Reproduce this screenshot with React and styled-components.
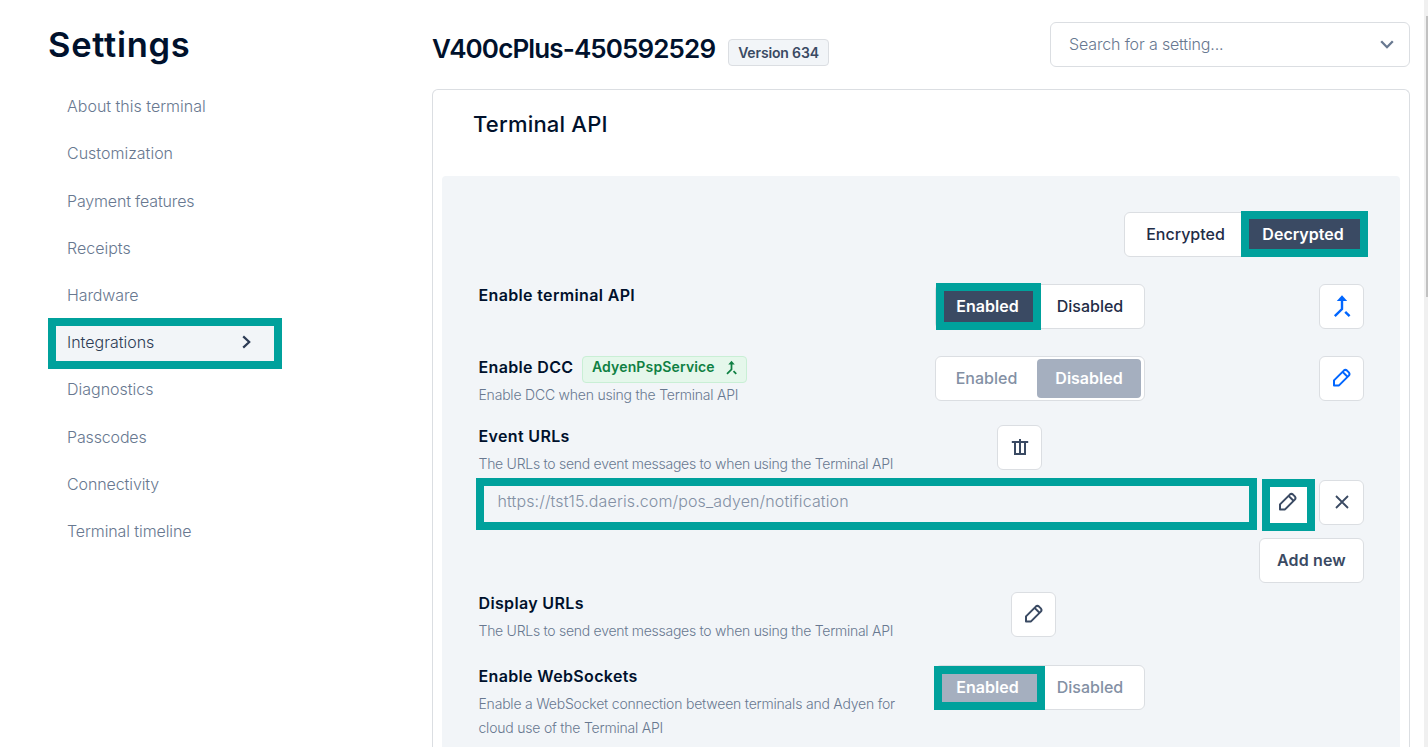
import React from "react";
import styled, { createGlobalStyle, css } from "styled-components";

const Global = createGlobalStyle`
  *, *::before, *::after { box-sizing: border-box; }
  html, body { margin: 0; height: 100%; overflow: hidden; background: #fff; }
  body { font-family: Inter, "Liberation Sans", sans-serif; font-size: 16px; color: #00112c; }
  button { font: inherit; }
`;

const Page = styled.div`
  display: flex;
  height: 747px;
  overflow: hidden;
  background: #fff;
`;

const Sidebar = styled.aside`
  flex: 0 0 432px;
  padding: 21px 0 0 48px;
`;

const SettingsTitle = styled.h1`
  margin: 0 0 13.7px;
  font-size: 34.5px;
  line-height: 48px;
  font-weight: 600;
  letter-spacing: 0.7px;
`;

const Nav = styled.nav`
  display: flex;
  flex-direction: column;
  width: 234px;
`;

const NavItem = styled.a`
  position: relative;
  display: flex;
  align-items: center;
  justify-content: space-between;
  height: 47.2px;
  padding: 0 31px 0 19px;
  font-size: 16px;
  font-weight: 300;
  letter-spacing: ${(p) => p.$spacing || 0}px;
  color: ${(p) => (p.$active ? "#2d3c55" : "#687890")};
  background: ${(p) => (p.$active ? "#f2f5f8" : "transparent")};
`;

const Frame = styled.span`
  position: absolute;
  z-index: 2;
  inset: ${(p) => p.$inset};
  border: 8px solid #00a19c;
  pointer-events: none;
`;

const Main = styled.main`
  flex: 1;
  display: flex;
  flex-direction: column;
  padding-right: 14px;
`;

const Header = styled.header`
  display: flex;
  flex: 0 0 89px;
  align-items: flex-start;
  padding-top: 22px;
`;

const DeviceName = styled.h2`
  margin: 9px 12px 0 0;
  width: 284px;
  white-space: nowrap;
  font-size: 26px;
  line-height: 36px;
  font-weight: 600;
  letter-spacing: -0.88px;
`;

const VersionTag = styled.span`
  margin-top: 17px;
  width: 101px;
  height: 27px;
  border: 1px solid #dbdee2;
  border-radius: 4px;
  background: #f2f5f8;
  color: #3a4a63;
  font-size: 14px;
  line-height: 26px;
  font-weight: 600;
  letter-spacing: -0.15px;
  text-align: center;
`;

const Search = styled.div`
  display: flex;
  align-items: center;
  justify-content: space-between;
  margin-left: auto;
  width: 360px;
  height: 45px;
  padding: 0 15px 1px 18px;
  border: 1px solid #dbdee2;
  border-radius: 6px;
  color: #687890;
  font-weight: 300;
  letter-spacing: -0.15px;
`;

const Card = styled.section`
  flex: 1;
  padding: 0 9px;
  border: 1px solid #dbdee2;
  border-bottom: 0;
  border-radius: 6px 6px 0 0;
`;

const CardTitle = styled.h3`
  margin: 0;
  height: 86px;
  padding: 17px 0 0 31px;
  font-size: 22px;
  line-height: 34px;
  font-weight: 500;
  letter-spacing: 0.2px;
`;

const Panel = styled.div`
  height: 600px;
  padding: 36px 36px 0;
  border-radius: 4px 4px 0 0;
  background: #f2f5f8;
`;

const Row = styled.div`
  display: flex;
  align-items: flex-start;
  justify-content: ${(p) => (p.$end ? "flex-end" : "flex-start")};
  height: ${(p) => p.$height}px;
`;

const Label = styled.div`
  flex: 0 0 ${(p) => p.$width || 457}px;
  margin-top: -1px;
  padding-left: 0.5px;
`;

const LabelLine = styled.div`
  display: flex;
  height: 24px;
  font-size: 16px;
  line-height: 24px;
  font-weight: 600;
  letter-spacing: 0.35px;
  white-space: nowrap;
`;

const Description = styled.p`
  margin: 4px 0 0;
  width: 430px;
  font-size: 14px;
  line-height: 24px;
  font-weight: 300;
  letter-spacing: ${(p) => p.$spacing || -0.21}px;
  color: #687890;
`;

const ServiceTag = styled.span`
  display: flex;
  justify-content: space-between;
  margin: 1px 0 0 8.5px;
  width: 165px;
  height: 27px;
  padding: 0 7px 0 9px;
  border: 1px solid #c9efd5;
  border-radius: 4px;
  background: #e5f7eb;
  color: #0f8043;
  font-size: 14px;
  line-height: 20px;
  letter-spacing: 0.15px;
  svg { margin-top: 3px; }
`;

const Segmented = styled.div`
  display: flex;
  width: ${(p) => p.$width}px;
  height: 45px;
  padding: 2px 3px 2px 0;
  border: 1px solid #dbdee2;
  border-radius: 6px;
  background: #fff;
`;

const segmentTone = {
  on: css`background: #3a4a63; color: #fff; font-weight: 600;`,
  off: css`color: #1f2d47; font-weight: 500;`,
  onMuted: css`background: #a5afbf; color: #fff; font-weight: 600;`,
  offMuted: css`color: #8390a4; font-weight: 500;`,
};

const Segment = styled.button`
  position: relative;
  flex: 0 0 ${(p) => p.$width}px;
  height: 39px;
  padding: 0 0 2px;
  border: 0;
  border-radius: 4px;
  background: transparent;
  font-size: 16px;
  ${(p) => segmentTone[p.$tone]}
`;

const Button = styled.button`
  position: relative;
  display: flex;
  align-items: center;
  justify-content: center;
  width: ${(p) => p.$width || 45}px;
  height: 45px;
  margin-left: ${(p) => p.$left || "0"};
  padding: 0 0 1px;
  border: 1px solid #dbdee2;
  border-radius: 6px;
  background: #fff;
  color: ${(p) => (p.$primary ? "#0066ff" : "#3a4a63")};
  font-weight: 600;
  letter-spacing: 0.15px;
  white-space: nowrap;
`;

const UrlField = styled.div`
  position: relative;
  width: 777px;
  height: 45px;
  padding-left: 19.5px;
  line-height: 43px;
  font-weight: 300;
  letter-spacing: 0.12px;
  color: #8390a4;
`;

const ScrollTrack = styled.div`
  flex: 0 0 4px;
  padding: 16px 0 0 2px;
  background: #f0f0f0;
`;

const ScrollThumb = styled.div`
  height: 281px;
  background: #c1c1c1;
`;

const Pencil = () => (
  <svg width="20" height="20" viewBox="0 0 20 20" fill="none" stroke="currentColor" strokeWidth="2" strokeLinejoin="round">
    <path d="M2 17.4V12.4L11.8 2.6Q13.4 1.2 15 2.6L16.8 4.4Q18.2 6 16.8 7.6L7 17.4Z" />
    <path d="M10.6 3.9L15.5 8.8" />
  </svg>
);

const Merge = ({ size = 24, stroke = 2.4 }) => (
  <svg width={size} height={size} viewBox="0 0 24 24" fill="none" stroke="currentColor" strokeWidth={stroke}>
    <path d="M12 5V15L4.8 22.2M15.2 17.8L19.6 22.2" />
    <path d="M12 1.2L17.2 7H6.8Z" fill="currentColor" stroke="none" />
  </svg>
);

const Trash = () => (
  <svg width="18" height="18" viewBox="0 0 18 18" fill="none" stroke="currentColor" strokeWidth="2">
    <path d="M0.8 4H17.2M9 1V16M4 4V16H14V4" />
  </svg>
);

const Cross = () => (
  <svg width="14" height="14" viewBox="0 0 14 14" fill="none" stroke="currentColor" strokeWidth="1.8">
    <path d="M1 1L13 13M13 1L1 13" />
  </svg>
);

const ChevronRight = () => (
  <svg width="9" height="14" viewBox="0 0 9 14" fill="none" stroke="currentColor" strokeWidth="2.2">
    <path d="M1.2 1.4L7.2 7L1.2 12.6" />
  </svg>
);

const ChevronDown = () => (
  <svg width="14" height="9" viewBox="0 0 14 9" fill="none" stroke="currentColor" strokeWidth="2.3">
    <path d="M1.2 1.2L7 7.2L12.8 1.2" />
  </svg>
);

const navItems = [
  ["About this terminal", 0],
  ["Customization", 0],
  ["Payment features", -0.16],
  ["Receipts", 0],
  ["Hardware", -0.1],
  ["Integrations", 0],
  ["Diagnostics", 0],
  ["Passcodes", -0.15],
  ["Connectivity", -0.1],
  ["Terminal timeline", -0.1],
];

export default function App() {
  return (
    <>
      <Global />
      <Page>
        <Sidebar>
          <SettingsTitle>Settings</SettingsTitle>
          <Nav>
            {navItems.map(([name, spacing]) => {
              const active = name === "Integrations";
              return (
                <NavItem key={name} $active={active} $spacing={spacing}>
                  {name}
                  {active && <ChevronRight />}
                  {active && <Frame $inset="-0.7px 0 -3.1px 0" />}
                </NavItem>
              );
            })}
          </Nav>
        </Sidebar>
        <Main>
          <Header>
            <DeviceName>V400cPlus-450592529</DeviceName>
            <VersionTag>Version 634</VersionTag>
            <Search>
              Search for a setting...
              <ChevronDown />
            </Search>
          </Header>
          <Card>
            <CardTitle>Terminal API</CardTitle>
            <Panel>
              <Row $height={72} $end>
                <Segmented $width={240}>
                  <Segment $width={121} $tone="off">Encrypted</Segment>
                  <Segment $width={114} $tone="on">
                    Decrypted
                    <Frame $inset="-4px -8px -3px -5px" />
                  </Segment>
                </Segmented>
              </Row>
              <Row $height={72}>
                <Label><LabelLine>Enable terminal API</LabelLine></Label>
                <Segmented $width={210}>
                  <Segment $width={103} $tone="on">
                    Enabled
                    <Frame $inset="-4px -2px -4px 0" />
                  </Segment>
                  <Segment $width={102} $tone="off">Disabled</Segment>
                </Segmented>
                <Button $left="auto" $primary><Merge /></Button>
              </Row>
              <Row $height={69}>
                <Label>
                  <LabelLine>
                    Enable DCC
                    <ServiceTag>AdyenPspService<Merge size={15} stroke={2.8} /></ServiceTag>
                  </LabelLine>
                  <Description>Enable DCC when using the Terminal API</Description>
                </Label>
                <Segmented $width={210}>
                  <Segment $width={101} $tone="offMuted">Enabled</Segment>
                  <Segment $width={104} $tone="onMuted">Disabled</Segment>
                </Segmented>
                <Button $left="auto" $primary><Pencil /></Button>
              </Row>
              <Row $height={55}>
                <Label $width={519}>
                  <LabelLine>Event URLs</LabelLine>
                  <Description $spacing={-0.27}>The URLs to send event messages to when using the Terminal API</Description>
                </Label>
                <Button><Trash /></Button>
              </Row>
              <Row $height={58}>
                <UrlField>
                  https://tst15.daeris.com/pos_adyen/notification
                  <Frame $inset="-2px -2px -5px -2px" />
                </UrlField>
                <Button $left="10px">
                  <Pencil />
                  <Frame $inset="-2px -6px -7px -4px" />
                </Button>
                <Button $left="auto"><Cross /></Button>
              </Row>
              <Row $height={54} $end>
                <Button $width={105}>Add new</Button>
              </Row>
              <Row $height={73}>
                <Label $width={533}>
                  <LabelLine>Display URLs</LabelLine>
                  <Description $spacing={-0.27}>The URLs to send event messages to when using the Terminal API</Description>
                </Label>
                <Button><Pencil /></Button>
              </Row>
              <Row $height={72}>
                <Label>
                  <LabelLine>Enable WebSockets</LabelLine>
                  <Description>
                    Enable a WebSocket connection between terminals and Adyen for cloud use of the Terminal API
                  </Description>
                </Label>
                <Segmented $width={210}>
                  <Segment $width={103} $tone="onMuted">
                    Enabled
                    <Frame $inset="-2px -6px -3px -2px" />
                  </Segment>
                  <Segment $width={102} $tone="offMuted">Disabled</Segment>
                </Segmented>
              </Row>
            </Panel>
          </Card>
        </Main>
        <ScrollTrack><ScrollThumb /></ScrollTrack>
      </Page>
    </>
  );
}
